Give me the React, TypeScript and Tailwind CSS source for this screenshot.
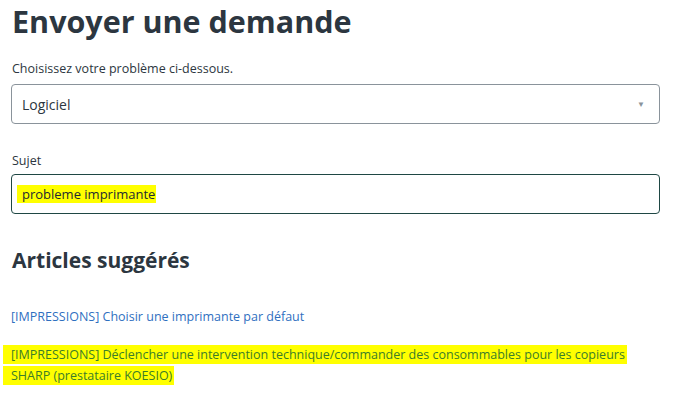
import React from 'react';

const font = { fontFamily: '"Open Sans", "Noto Sans", sans-serif' };

export default function App() {
  return (
    <div className="w-[680px] h-[400px] bg-white overflow-hidden pl-[11px] pr-[20px] pt-[2px]" style={font}>
      {/* Title */}
      <h1 className="text-[30.5px] leading-[38px] font-bold text-[#2c3640] pl-[1px]">
        Envoyer une demande
      </h1>

      {/* Problem select */}
      <label className="block mt-[21px] pl-[1px] text-[12.5px] leading-[16px] text-[#2c3640]">
        Choisissez votre problème ci-dessous.
      </label>
      <div className="mt-[7px] h-[40px] border border-[#8a939b] rounded-[4px] flex items-center justify-between pl-[10px] pr-[14px]">
        <span className="text-[14px] text-[#2c3640]">Logiciel</span>
        <span className="text-[8px] text-[#8a939b]">▼</span>
      </div>

      {/* Subject */}
      <label className="block mt-[29px] pl-[1px] text-[12.5px] leading-[16px] text-[#2c3640]">Sujet</label>
      <div className="mt-[5px] h-[40px] border border-[#1f4744] rounded-[4px] flex items-center pl-[5px]">
        <span className="bg-[#ffff00] text-[13px] leading-[18px] text-[#1e2a32] pl-[5px] pr-[1px]">
          probleme imprimante
        </span>
      </div>

      {/* Suggested articles */}
      <h2 className="mt-[33px] pl-[1px] text-[21px] leading-[26px] font-bold text-[#2c3640]">
        Articles suggérés
      </h2>

      <div className="mt-[33px] text-[12.5px] leading-[21px]">
        <a className="block text-[#2f6fbf]">[IMPRESSIONS] Choisir une imprimante par défaut</a>
        <a className="block mt-[17px] -ml-[8px] text-[#3c7d2a]">
          <span className="bg-[#ffff00] pl-[8px] pr-[2px] [box-decoration-break:clone] py-[1px]">
            [IMPRESSIONS] Déclencher une intervention technique/commander des consommables pour les copieurs
            <br />
            SHARP (prestataire KOESIO)
          </span>
        </a>
      </div>
    </div>
  );
}
